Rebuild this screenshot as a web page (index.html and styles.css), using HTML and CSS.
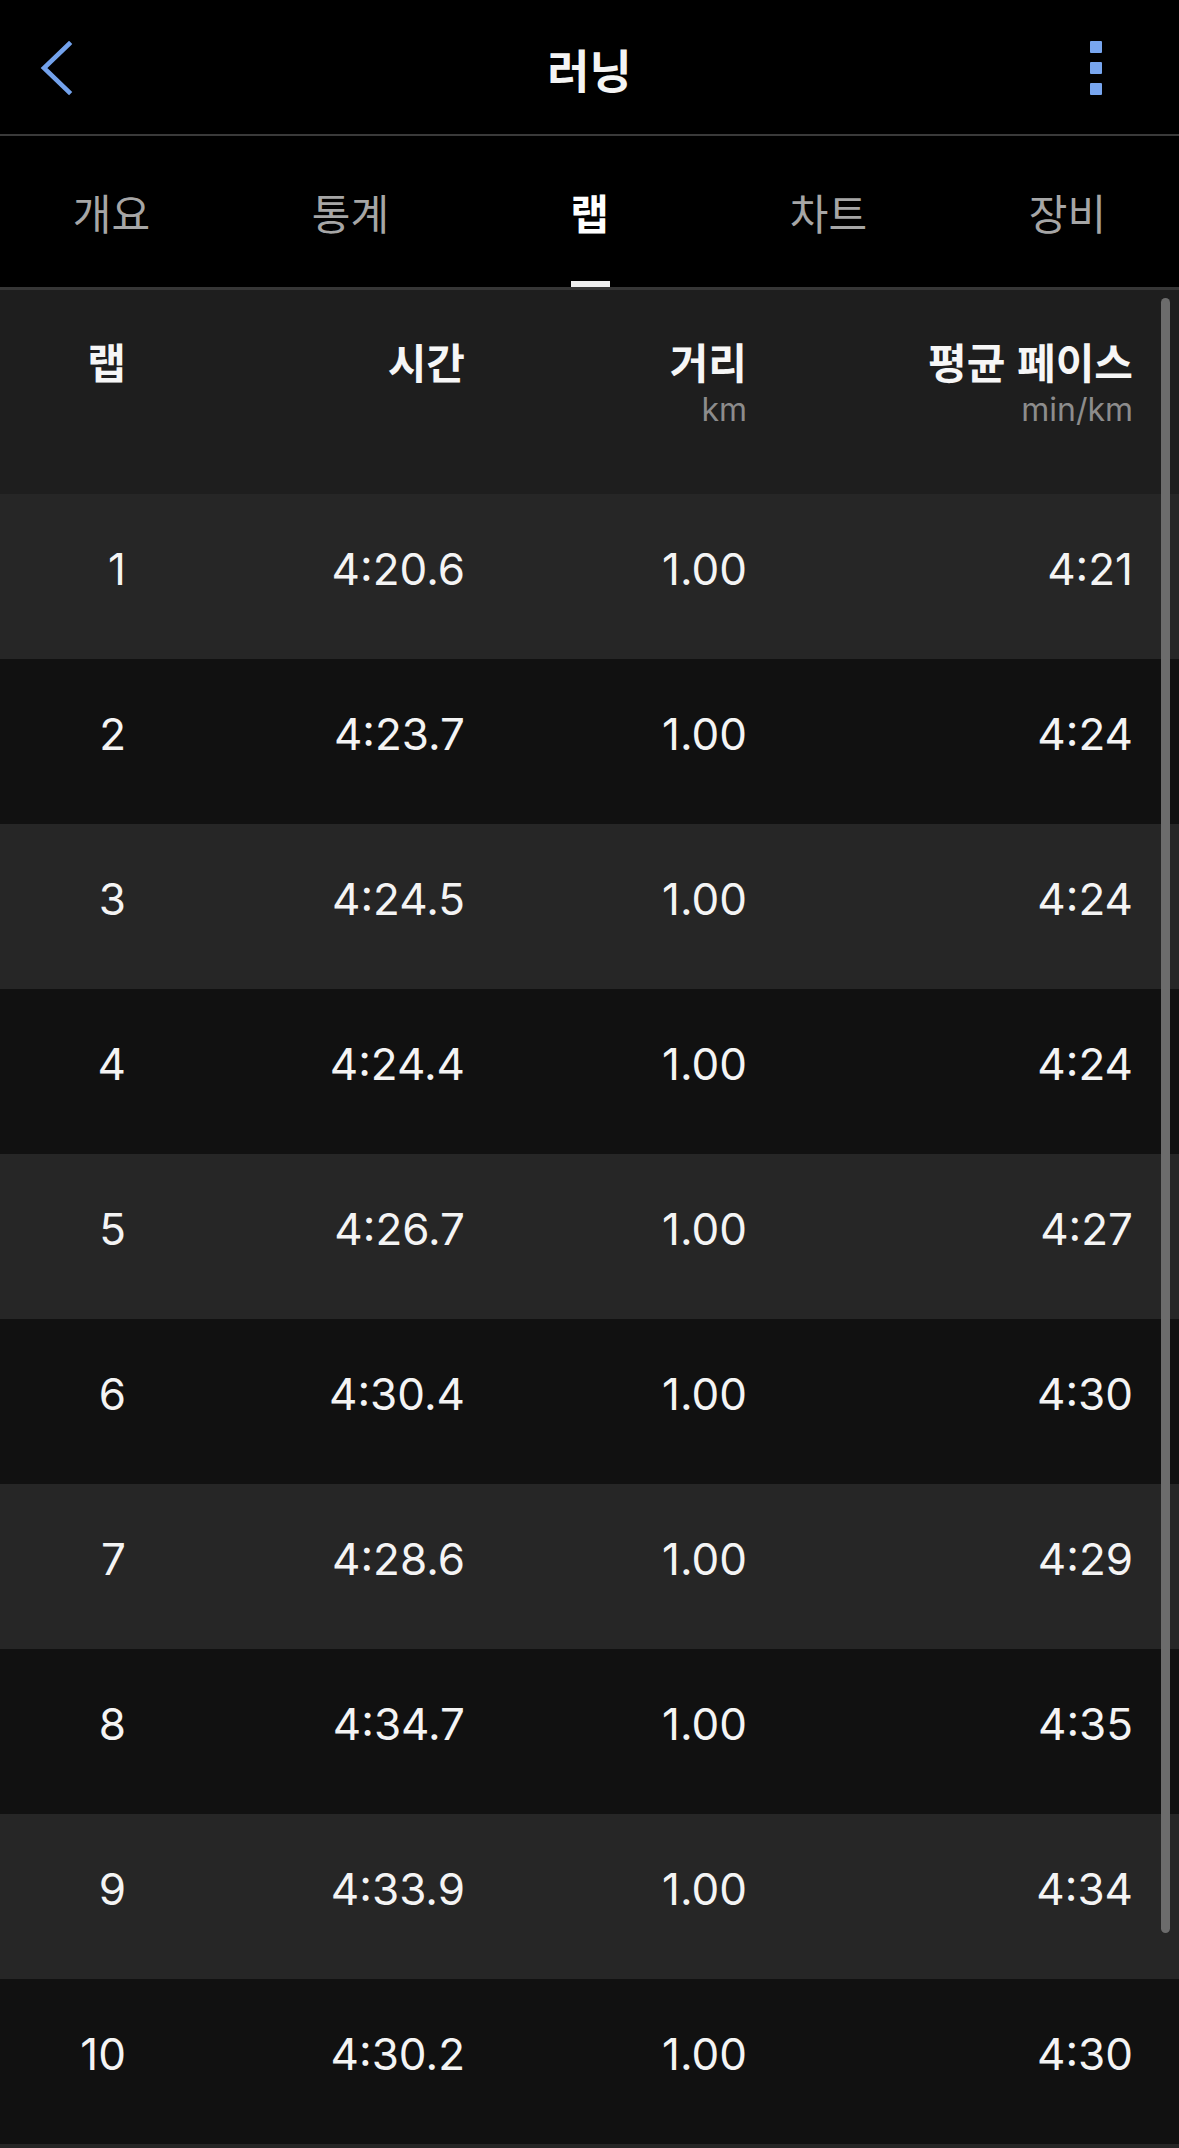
FILE: index.html
```html
<!DOCTYPE html>
<html lang="ko">
<head>
<meta charset="utf-8">
<title>러닝</title>
<link rel="stylesheet" href="styles.css">
</head>
<body>
<div class="screen">
  <header class="appbar">
    <div class="back">
      <svg width="36" height="56" viewBox="0 0 36 56"><polyline points="29,3 4,27 29,51" fill="none" stroke="#73a2ec" stroke-width="4.6" stroke-linecap="square" stroke-linejoin="miter"/></svg>
    </div>
    <h1 class="title">러닝</h1>
    <div class="kebab"><span></span><span></span><span></span></div>
  </header>
  <nav class="tabs">
    <div class="tab">개요</div>
    <div class="tab">통계</div>
    <div class="tab active">랩</div>
    <div class="tab">차트</div>
    <div class="tab">장비</div>
  </nav>
  <main class="content">
    <div class="thead">
      <div class="th"><div class="th-label">랩</div></div>
      <div class="th"><div class="th-label">시간</div></div>
      <div class="th"><div class="th-label">거리</div><div class="th-unit">km</div></div>
      <div class="th"><div class="th-label">평균 페이스</div><div class="th-unit">min/km</div></div>
    </div>
    <div class="row odd"><span>1</span><span>4:20.6</span><span>1.00</span><span>4:21</span></div>
    <div class="row even"><span>2</span><span>4:23.7</span><span>1.00</span><span>4:24</span></div>
    <div class="row odd"><span>3</span><span>4:24.5</span><span>1.00</span><span>4:24</span></div>
    <div class="row even"><span>4</span><span>4:24.4</span><span>1.00</span><span>4:24</span></div>
    <div class="row odd"><span>5</span><span>4:26.7</span><span>1.00</span><span>4:27</span></div>
    <div class="row even"><span>6</span><span>4:30.4</span><span>1.00</span><span>4:30</span></div>
    <div class="row odd"><span>7</span><span>4:28.6</span><span>1.00</span><span>4:29</span></div>
    <div class="row even"><span>8</span><span>4:34.7</span><span>1.00</span><span>4:35</span></div>
    <div class="row odd"><span>9</span><span>4:33.9</span><span>1.00</span><span>4:34</span></div>
    <div class="row even"><span>10</span><span>4:30.2</span><span>1.00</span><span>4:30</span></div>
    <div class="row odd"></div>
    <div class="scrollbar"></div>
  </main>
</div>
</body>
</html>
```
FILE: styles.css
```css
html, body {
  margin: 0;
  padding: 0;
  background: #000;
}
body {
  width: 1179px;
  height: 2148px;
  overflow: hidden;
  font-family: "Noto Sans CJK KR", "Noto Sans", sans-serif;
  color: #fff;
}
.screen {
  display: flex;
  flex-direction: column;
}
.appbar {
  height: 134px;
  display: grid;
  grid-template-columns: 1fr auto 1fr;
  align-items: center;
  border-bottom: 2px solid #3a3a3a;
  background: #000;
}
.back {
  padding-left: 40px;
  display: flex;
  align-items: center;
  padding-top: 4px;
}
.back svg { display: block; }
.title {
  margin: 0;
  font-size: 46px;
  font-weight: 700;
  line-height: 1;
  color: #f4f4f4;
  padding-top: 2px;
}
.kebab {
  justify-self: end;
  padding-right: 77px;
  display: flex;
  flex-direction: column;
  gap: 9px;
  padding-top: 1px;
}
.kebab span {
  display: block;
  width: 12px;
  height: 12px;
  border-radius: 1px;
  background: #78a6ef;
}
.tabs {
  height: 151px;
  display: grid;
  grid-template-columns: repeat(5, 239px);
  justify-content: center;
  border-bottom: 3px solid #363636;
  overflow: hidden;
}
.tab {
  display: flex;
  align-items: center;
  justify-content: center;
  font-size: 42px;
  line-height: 1;
  color: #a6a6a6;
  position: relative;
}
.tab.active {
  color: #fff;
  font-weight: 700;
}
.tab.active::after {
  content: "";
  position: absolute;
  bottom: 0;
  left: 50%;
  width: 39px;
  height: 6px;
  margin-left: -19px;
  background: #efefef;
}
.content {
  position: relative;
  display: flex;
  flex-direction: column;
}
.thead {
  height: 204px;
  box-sizing: border-box;
  background: #1e1e1e;
  display: grid;
  grid-template-columns: 126px 339px 282px 386px;
  align-content: start;
  padding-top: 50px;
}
.th {
  display: flex;
  flex-direction: column;
  align-items: flex-end;
}
.th-label {
  font-size: 42px;
  font-weight: 700;
  line-height: 1;
  color: #f6f6f6;
  white-space: nowrap;
}
.th-unit {
  font-family: "Inter", "Liberation Sans", sans-serif;
  font-size: 32px;
  line-height: 1;
  color: #8c8c8c;
  margin-top: 12px;
}
.row {
  height: 165px;
  flex: none;
  box-sizing: border-box;
  display: grid;
  grid-template-columns: 126px 339px 282px 386px;
  align-items: center;
  padding-bottom: 15px;
  font-family: "Inter", "Liberation Sans", sans-serif;
  font-size: 44px;
  font-weight: 400;
  color: #f4f4f4;
}
.row span {
  text-align: right;
  line-height: 1;
}
.row.odd { background: #262626; }
.row.even { background: #111111; }
.scrollbar {
  position: absolute;
  top: 8px;
  right: 9px;
  width: 9px;
  height: 1635px;
  border-radius: 5px;
  background: #6c6c6c;
}
```
